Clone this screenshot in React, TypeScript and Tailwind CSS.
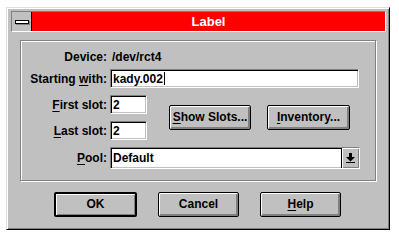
import type { ReactNode } from 'react'

const font = "font-['Liberation_Sans',Arial,sans-serif] font-bold text-[12px] text-black"

function U({ children }: { children: ReactNode }) {
  return <span className="underline underline-offset-[2px] decoration-1">{children}</span>
}

function Sunken({ className, children }: { className: string; children?: ReactNode }) {
  return (
    <div
      className={`box-border border border-t-[#808080] border-l-[#808080] border-r-white border-b-white bg-white shadow-[inset_1px_1px_0_#000,inset_-1px_-1px_0_#c0c0c0] ${className}`}
    >
      {children}
    </div>
  )
}

function Btn({ label, w, def }: { label: ReactNode; w: string; def?: boolean }) {
  return (
    <div
      className={`box-border flex h-[25px] items-center justify-center rounded-[2px] border-black bg-[#c0c0c0] ${
        def
          ? 'border-2 shadow-[inset_1px_1px_0_#fff,inset_-1px_-1px_0_#808080]'
          : 'border shadow-[inset_1px_1px_0_#fff,inset_-1px_-1px_0_#808080,inset_-2px_-2px_0_#808080]'
      } ${w}`}
    >
      <span className="-mt-[1px]">{label}</span>
    </div>
  )
}

function Label({ children }: { children: ReactNode }) {
  return <div className="mr-[3px] w-[86px] shrink-0 text-right">{children}</div>
}

export default function App() {
  return (
    <div className={`h-[240px] w-[399px] bg-white pl-[6px] pt-[7px] ${font}`}>
      <div className="box-border h-[223px] w-[384px] border border-t-[#dfdfdf] border-l-[#dfdfdf] border-r-black border-b-black bg-[#c0c0c0] pl-[4px] pr-[3px] pt-[3px] shadow-[inset_1px_1px_0_#fff,inset_-1px_-1px_0_#808080]">
        {/* title bar */}
        <div className="box-border flex h-[21px] w-[375px] border border-t-[#808080] border-l-[#808080] border-r-white border-b-white">
          <div className="box-border flex h-[19px] w-[20px] items-center justify-center border-r border-black bg-[#c0c0c0]">
            <div className="box-border h-[4px] w-[14px] border border-black bg-white shadow-[1px_1px_0_#808080]" />
          </div>
          <div className="flex flex-1 items-center justify-center bg-[#ff0000] text-[13px] text-white">Label</div>
        </div>

        {/* group */}
        <div className="ml-[9px] mt-[8px] box-border h-[141px] w-[356px] border border-[#808080] pt-[8px] shadow-[inset_1px_1px_0_#fff,1px_1px_0_#fff]">
          <div className="flex h-[16px] items-center">
            <Label>Device:</Label>
            <span className="ml-[2px]">/dev/rct4</span>
          </div>
          <div className="mt-[4px] flex items-center">
            <Label>
              Starting <U>w</U>ith:
            </Label>
            <Sunken className="flex h-[19px] w-[249px] items-center pl-[2px]">
              <span>kady.002</span>
              <span className="ml-[1px] h-[13px] w-[1px] bg-black" />
            </Sunken>
          </div>
          <div className="mt-[7px] flex items-center">
            <div className="flex flex-col">
              <div className="flex items-center">
                <Label>
                  <U>F</U>irst slot:
                </Label>
                <Sunken className="flex h-[19px] w-[37px] items-center pl-[2px]">2</Sunken>
              </div>
              <div className="mt-[7px] flex items-center">
                <Label>
                  <U>L</U>ast slot:
                </Label>
                <Sunken className="flex h-[19px] w-[37px] items-center pl-[2px]">2</Sunken>
              </div>
            </div>
            <div className="ml-[22px]">
              <Btn
                w="w-[82px]"
                label={
                  <>
                    <U>S</U>how Slots...
                  </>
                }
              />
            </div>
            <div className="ml-[16px]">
              <Btn
                w="w-[83px]"
                label={
                  <>
                    <U>I</U>nventory...
                  </>
                }
              />
            </div>
          </div>
          <div className="mt-[7px] flex items-center">
            <Label>
              <U>P</U>ool:
            </Label>
            <Sunken className="flex h-[22px] w-[250px] items-center">
              <span className="flex-1 pl-[2px]">Default</span>
              <div className="box-border flex h-full w-[18px] items-center justify-center border-l border-black bg-[#c0c0c0] shadow-[inset_1px_1px_0_#fff,inset_-1px_-1px_0_#808080]">
                <svg width="9" height="11" viewBox="0 0 9 11">
                  <rect x="3" y="0" width="3" height="4" fill="#000" />
                  <polygon points="0,4 9,4 4.5,8.5" fill="#000" />
                  <rect x="0" y="9" width="9" height="1" fill="#000" />
                </svg>
              </div>
            </Sunken>
          </div>
        </div>

        {/* bottom buttons */}
        <div className="ml-[43px] mt-[11px] flex">
          <Btn w="w-[83px]" def label="OK" />
          <div className="ml-[21px]">
            <Btn w="w-[81px]" label="Cancel" />
          </div>
          <div className="ml-[21px]">
            <Btn
              w="w-[81px]"
              label={
                <>
                  <U>H</U>elp
                </>
              }
            />
          </div>
        </div>
      </div>
    </div>
  )
}
